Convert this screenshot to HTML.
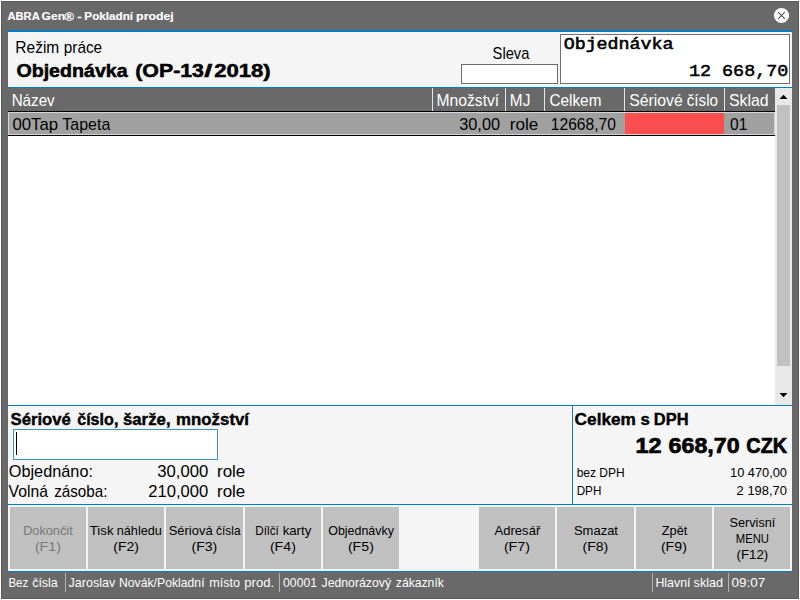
<!DOCTYPE html>
<html lang="cs">
<head>
<meta charset="utf-8">
<title>ABRA Gen® - Pokladní prodej</title>
<style>
html,body{margin:0;padding:0;background:#fff;}
body{width:800px;height:600px;position:relative;overflow:hidden;font-family:"Liberation Sans", Arial, sans-serif;}
#win{position:absolute;left:1px;top:1px;width:796px;height:596px;border:1px solid #5a5a5a;background:#696969;}
#ui div{position:absolute;box-sizing:border-box;}
#ui{position:absolute;left:0;top:0;width:800px;height:600px;}
svg{position:absolute;left:0;top:0;}
text{white-space:pre;}
.s{font-family:"Liberation Sans", Arial, sans-serif;}
.sb{font-family:"Liberation Sans", Arial, sans-serif;font-weight:bold;}
.m{font-family:"Liberation Mono", "Courier New", monospace;}
.mb{font-family:"Liberation Mono", "Courier New", monospace;font-weight:bold;}
</style>
</head>
<body>
<div id="win"></div>
<div id="ui">
<div style="left:8px;top:30px;width:784px;height:58px;background:#f5f5f5;border-top:2px solid #007bc9;border-bottom:1px solid #007bc9;"></div>
<div style="left:461px;top:64px;width:97px;height:20px;background:#fff;border:1px solid #6c6c6c;"></div>
<div style="left:560px;top:34px;width:230px;height:50px;background:#fff;border:1px solid #6e6e6e;"></div>
<div style="left:8px;top:88px;width:784px;height:317px;background:#fff;"></div>
<div style="left:8px;top:88px;width:767px;height:23px;background:#696969;"></div>
<div style="left:432px;top:88px;width:1px;height:23px;background:#e6e6e6;"></div>
<div style="left:505px;top:88px;width:1px;height:23px;background:#e6e6e6;"></div>
<div style="left:544px;top:88px;width:1px;height:23px;background:#e6e6e6;"></div>
<div style="left:624px;top:88px;width:1px;height:23px;background:#e6e6e6;"></div>
<div style="left:724px;top:88px;width:1px;height:23px;background:#e6e6e6;"></div>
<div style="left:8px;top:111px;width:767px;height:1px;background:#000;"></div>
<div style="left:8px;top:112px;width:767px;height:23px;background:#a0a0a0;border:1px solid #d4d4d4;"></div>
<div style="left:625px;top:113px;width:99px;height:21px;background:#fc4e4e;"></div>
<div style="left:8px;top:135px;width:767px;height:1px;background:#000;"></div>
<div style="left:775px;top:88px;width:17px;height:317px;background:#e8e8e8;"></div>
<div style="left:777px;top:105px;width:13px;height:261px;background:#c0c0c0;"></div>
<div style="left:8px;top:405px;width:784px;height:1px;background:#007bc9;"></div>
<div style="left:8px;top:406px;width:784px;height:165px;background:#f5f5f5;"></div>
<div style="left:572px;top:406px;width:1px;height:98px;background:#007bc9;"></div>
<div style="left:8px;top:504px;width:784px;height:1px;background:#007bc9;"></div>
<div style="left:13px;top:429px;width:205px;height:31px;background:#fff;border:1px solid #3a96c8;"></div>
<div style="left:16px;top:432px;width:1px;height:23px;background:#000;"></div>
<div style="left:10px;top:507px;width:76px;height:62px;background:#c0c0c0;"></div>
<div style="left:88px;top:507px;width:76px;height:62px;background:#c0c0c0;"></div>
<div style="left:166px;top:507px;width:77px;height:62px;background:#c0c0c0;"></div>
<div style="left:245px;top:507px;width:76px;height:62px;background:#c0c0c0;"></div>
<div style="left:323px;top:507px;width:76px;height:62px;background:#c0c0c0;"></div>
<div style="left:479px;top:507px;width:76px;height:62px;background:#c0c0c0;"></div>
<div style="left:557px;top:507px;width:77px;height:62px;background:#c0c0c0;"></div>
<div style="left:636px;top:507px;width:76px;height:62px;background:#c0c0c0;"></div>
<div style="left:714px;top:507px;width:76px;height:62px;background:#c0c0c0;"></div>
<div style="left:8px;top:571px;width:784px;height:1px;background:#007bc9;"></div>
<div style="left:65px;top:573px;width:1px;height:19px;background:#b4b4b4;"></div>
<div style="left:279px;top:573px;width:1px;height:19px;background:#b4b4b4;"></div>
<div style="left:652px;top:573px;width:1px;height:19px;background:#b4b4b4;"></div>
<div style="left:728px;top:573px;width:1px;height:19px;background:#b4b4b4;"></div>
</div>
<svg width="800" height="600" viewBox="0 0 800 600">
<circle cx="781.5" cy="15.5" r="7.6" fill="#fff"/>
<path d="M778.2 12.2 L784.8 18.8 M784.8 12.2 L778.2 18.8" stroke="#555" stroke-width="1.1" fill="none"/>
<path d="M779.5 99 L787.5 99 L783.5 94.8 Z" fill="#000"/>
<path d="M779.5 393 L787.5 393 L783.5 397.2 Z" fill="#000"/>
<text class="sb" y="20.00" font-size="11.6" fill="#ffffff" stroke="#ffffff" stroke-width="0.15"><tspan x="7.53" textLength="31.79" lengthAdjust="spacingAndGlyphs">ABRA</tspan> <tspan x="41.60" textLength="23.40" lengthAdjust="spacingAndGlyphs">Gen</tspan><tspan x="64.49" font-size="13.2" y="20.8" textLength="9.50" lengthAdjust="spacingAndGlyphs">®</tspan> <tspan x="77.34" y="20" textLength="4.51" lengthAdjust="spacingAndGlyphs">-</tspan> <tspan x="84.36" textLength="48.76" lengthAdjust="spacingAndGlyphs">Pokladní</tspan> <tspan x="136.11" textLength="37.66" lengthAdjust="spacingAndGlyphs">prodej</tspan></text>
<text class="s" y="53.00" font-size="17" fill="#000"><tspan x="15.29" textLength="44.00" lengthAdjust="spacingAndGlyphs">Režim</tspan> <tspan x="63.78" textLength="38.32" lengthAdjust="spacingAndGlyphs">práce</tspan></text>
<text class="sb" y="77.00" font-size="18.1" fill="#000" stroke="#000" stroke-width="0.5"><tspan x="16.41" textLength="111.27" lengthAdjust="spacingAndGlyphs">Objednávka</tspan> <tspan x="135.28" textLength="68.71" lengthAdjust="spacingAndGlyphs">(OP-13</tspan><tspan x="204.16" textLength="8.05" lengthAdjust="spacingAndGlyphs">/</tspan><tspan x="214.28" textLength="56.43" lengthAdjust="spacingAndGlyphs">2018)</tspan></text>
<text class="s" y="59.00" font-size="17" fill="#000"><tspan x="492.62" textLength="36.79" lengthAdjust="spacingAndGlyphs">Sleva</tspan></text>
<text class="m" y="48.50" font-size="16" fill="#000" stroke="#000" stroke-width="0.55"><tspan x="563.65" textLength="109.95" lengthAdjust="spacingAndGlyphs">Objednávka</tspan></text>
<text class="m" y="76.30" font-size="17.2" fill="#000" stroke="#000" stroke-width="0.5"><tspan x="688.93" textLength="99.38" lengthAdjust="spacingAndGlyphs">12 668,70</tspan></text>
<text class="s" y="105.50" font-size="17" fill="#ffffff"><tspan x="11.63" textLength="43.09" lengthAdjust="spacingAndGlyphs">Název</tspan></text>
<text class="s" y="105.50" font-size="17" fill="#ffffff"><tspan x="436.46" textLength="62.77" lengthAdjust="spacingAndGlyphs">Množství</tspan></text>
<text class="s" y="105.50" font-size="17" fill="#ffffff"><tspan x="509.85" textLength="20.57" lengthAdjust="spacingAndGlyphs">MJ</tspan></text>
<text class="s" y="105.50" font-size="17" fill="#ffffff"><tspan x="549.56" textLength="51.81" lengthAdjust="spacingAndGlyphs">Celkem</tspan></text>
<text class="s" y="105.50" font-size="17" fill="#ffffff"><tspan x="629.18" textLength="53.56" lengthAdjust="spacingAndGlyphs">Sériové</tspan> <tspan x="686.78" textLength="31.21" lengthAdjust="spacingAndGlyphs">číslo</tspan></text>
<text class="s" y="105.50" font-size="17" fill="#ffffff"><tspan x="728.98" textLength="39.62" lengthAdjust="spacingAndGlyphs">Sklad</tspan></text>
<text class="s" y="129.70" font-size="17" fill="#000"><tspan x="12.42" textLength="45.67" lengthAdjust="spacingAndGlyphs">00Tap</tspan> <tspan x="62.36" textLength="47.91" lengthAdjust="spacingAndGlyphs">Tapeta</tspan></text>
<text class="s" y="129.70" font-size="17" fill="#000"><tspan x="459.21" textLength="40.87" lengthAdjust="spacingAndGlyphs">30,00</tspan></text>
<text class="s" y="129.70" font-size="17" fill="#000"><tspan x="509.69" textLength="28.60" lengthAdjust="spacingAndGlyphs">role</tspan></text>
<text class="s" y="129.70" font-size="17" fill="#000"><tspan x="550.76" textLength="65.26" lengthAdjust="spacingAndGlyphs">12668,70</tspan></text>
<text class="s" y="129.70" font-size="17" fill="#000"><tspan x="730.04" textLength="17.27" lengthAdjust="spacingAndGlyphs">01</tspan></text>
<text class="sb" y="425.00" font-size="16.6" fill="#000" stroke="#000" stroke-width="0.4"><tspan x="10.57" textLength="60.32" lengthAdjust="spacingAndGlyphs">Sériové</tspan> <tspan x="77.20" textLength="41.18" lengthAdjust="spacingAndGlyphs">číslo,</tspan> <tspan x="122.96" textLength="47.60" lengthAdjust="spacingAndGlyphs">šarže,</tspan> <tspan x="176.13" textLength="72.88" lengthAdjust="spacingAndGlyphs">množství</tspan></text>
<text class="s" y="476.60" font-size="17" fill="#000"><tspan x="8.73" textLength="84.25" lengthAdjust="spacingAndGlyphs">Objednáno:</tspan></text>
<text class="s" y="476.60" font-size="17" fill="#000"><tspan x="157.28" textLength="50.99" lengthAdjust="spacingAndGlyphs">30,000</tspan></text>
<text class="s" y="476.60" font-size="17" fill="#000"><tspan x="216.99" textLength="28.30" lengthAdjust="spacingAndGlyphs">role</tspan></text>
<text class="s" y="497.40" font-size="17" fill="#000"><tspan x="8.59" textLength="39.40" lengthAdjust="spacingAndGlyphs">Volná</tspan> <tspan x="54.17" textLength="53.26" lengthAdjust="spacingAndGlyphs">zásoba:</tspan></text>
<text class="s" y="497.40" font-size="17" fill="#000"><tspan x="148.30" textLength="59.88" lengthAdjust="spacingAndGlyphs">210,000</tspan></text>
<text class="s" y="497.40" font-size="17" fill="#000"><tspan x="216.99" textLength="28.30" lengthAdjust="spacingAndGlyphs">role</tspan></text>
<text class="sb" y="425.00" font-size="16.6" fill="#000" stroke="#000" stroke-width="0.4"><tspan x="574.61" textLength="61.31" lengthAdjust="spacingAndGlyphs">Celkem</tspan> <tspan x="640.43" textLength="9.36" lengthAdjust="spacingAndGlyphs">s</tspan> <tspan x="653.86" textLength="34.73" lengthAdjust="spacingAndGlyphs">DPH</tspan></text>
<text class="sb" y="453.00" font-size="22.2" fill="#000" stroke="#000" stroke-width="0.7"><tspan x="635.53" textLength="26.00" lengthAdjust="spacingAndGlyphs">12</tspan> <tspan x="668.54" textLength="71.10" lengthAdjust="spacingAndGlyphs">668,70</tspan> <tspan x="746.32" textLength="40.81" lengthAdjust="spacingAndGlyphs">CZK</tspan></text>
<text class="s" y="477.00" font-size="13.6" fill="#000"><tspan x="576.67" textLength="48.05" lengthAdjust="spacingAndGlyphs">bez DPH</tspan></text>
<text class="s" y="477.00" font-size="13.6" fill="#000"><tspan x="730.06" textLength="56.95" lengthAdjust="spacingAndGlyphs">10 470,00</tspan></text>
<text class="s" y="495.00" font-size="13.6" fill="#000"><tspan x="576.70" textLength="24.66" lengthAdjust="spacingAndGlyphs">DPH</tspan></text>
<text class="s" y="495.00" font-size="13.6" fill="#000"><tspan x="736.61" textLength="50.38" lengthAdjust="spacingAndGlyphs">2 198,70</tspan></text>
<text class="s" y="535.00" font-size="13.6" fill="#787878"><tspan x="23.13" textLength="49.56" lengthAdjust="spacingAndGlyphs">Dokončit</tspan></text>
<text class="s" y="551.00" font-size="13.6" fill="#787878"><tspan x="34.91" textLength="25.94" lengthAdjust="spacingAndGlyphs">(F1)</tspan></text>
<text class="s" y="535.00" font-size="13.6" fill="#000"><tspan x="89.78" textLength="23.74" lengthAdjust="spacingAndGlyphs">Tisk</tspan> <tspan x="116.79" textLength="45.10" lengthAdjust="spacingAndGlyphs">náhledu</tspan></text>
<text class="s" y="551.00" font-size="13.6" fill="#000"><tspan x="113.32" textLength="25.62" lengthAdjust="spacingAndGlyphs">(F2)</tspan></text>
<text class="s" y="535.00" font-size="13.6" fill="#000"><tspan x="168.70" textLength="43.89" lengthAdjust="spacingAndGlyphs">Sériová</tspan> <tspan x="216.07" textLength="24.50" lengthAdjust="spacingAndGlyphs">čísla</tspan></text>
<text class="s" y="551.00" font-size="13.6" fill="#000"><tspan x="191.52" textLength="25.79" lengthAdjust="spacingAndGlyphs">(F3)</tspan></text>
<text class="s" y="535.00" font-size="13.6" fill="#000"><tspan x="255.32" textLength="23.42" lengthAdjust="spacingAndGlyphs">Dílčí</tspan> <tspan x="282.66" textLength="28.64" lengthAdjust="spacingAndGlyphs">karty</tspan></text>
<text class="s" y="551.00" font-size="13.6" fill="#000"><tspan x="269.91" textLength="25.94" lengthAdjust="spacingAndGlyphs">(F4)</tspan></text>
<text class="s" y="535.00" font-size="13.6" fill="#000"><tspan x="328.23" textLength="65.72" lengthAdjust="spacingAndGlyphs">Objednávky</tspan></text>
<text class="s" y="551.00" font-size="13.6" fill="#000"><tspan x="347.91" textLength="25.94" lengthAdjust="spacingAndGlyphs">(F5)</tspan></text>
<text class="s" y="535.00" font-size="13.6" fill="#000"><tspan x="494.58" textLength="45.65" lengthAdjust="spacingAndGlyphs">Adresář</tspan></text>
<text class="s" y="551.00" font-size="13.6" fill="#000"><tspan x="503.91" textLength="25.94" lengthAdjust="spacingAndGlyphs">(F7)</tspan></text>
<text class="s" y="535.00" font-size="13.6" fill="#000"><tspan x="573.89" textLength="44.12" lengthAdjust="spacingAndGlyphs">Smazat</tspan></text>
<text class="s" y="551.00" font-size="13.6" fill="#000"><tspan x="582.52" textLength="25.79" lengthAdjust="spacingAndGlyphs">(F8)</tspan></text>
<text class="s" y="535.00" font-size="13.6" fill="#000"><tspan x="661.66" textLength="25.69" lengthAdjust="spacingAndGlyphs">Zpět</tspan></text>
<text class="s" y="551.00" font-size="13.6" fill="#000"><tspan x="660.91" textLength="25.94" lengthAdjust="spacingAndGlyphs">(F9)</tspan></text>
<text class="s" y="527.00" font-size="13.6" fill="#000"><tspan x="729.42" textLength="45.96" lengthAdjust="spacingAndGlyphs">Servisní</tspan></text>
<text class="s" y="543.00" font-size="13.6" fill="#000"><tspan x="735.76" textLength="33.22" lengthAdjust="spacingAndGlyphs">MENU</tspan></text>
<text class="s" y="559.00" font-size="13.6" fill="#000"><tspan x="736.50" textLength="31.72" lengthAdjust="spacingAndGlyphs">(F12)</tspan></text>
<text class="s" y="587.00" font-size="13.6" fill="#ffffff"><tspan x="8.44" textLength="19.67" lengthAdjust="spacingAndGlyphs">Bez</tspan> <tspan x="32.16" textLength="25.62" lengthAdjust="spacingAndGlyphs">čísla</tspan></text>
<text class="s" y="587.00" font-size="13.6" fill="#ffffff"><tspan x="68.56" textLength="46.59" lengthAdjust="spacingAndGlyphs">Jaroslav</tspan> <tspan x="119.01" textLength="85.54" lengthAdjust="spacingAndGlyphs">Novák/Pokladní</tspan> <tspan x="209.21" textLength="30.76" lengthAdjust="spacingAndGlyphs">místo</tspan> <tspan x="244.33" textLength="29.74" lengthAdjust="spacingAndGlyphs">prod.</tspan></text>
<text class="s" y="587.00" font-size="13.6" fill="#ffffff"><tspan x="283.07" textLength="33.95" lengthAdjust="spacingAndGlyphs">00001</tspan> <tspan x="321.50" textLength="69.55" lengthAdjust="spacingAndGlyphs">Jednorázový</tspan> <tspan x="395.82" textLength="48.05" lengthAdjust="spacingAndGlyphs">zákazník</tspan></text>
<text class="s" y="587.00" font-size="13.6" fill="#ffffff"><tspan x="655.42" textLength="35.16" lengthAdjust="spacingAndGlyphs">Hlavní</tspan> <tspan x="693.61" textLength="29.44" lengthAdjust="spacingAndGlyphs">sklad</tspan></text>
<text class="s" y="587.00" font-size="13.6" fill="#ffffff"><tspan x="731.49" textLength="33.70" lengthAdjust="spacingAndGlyphs">09:07</tspan></text>
</svg>
</body>
</html>
